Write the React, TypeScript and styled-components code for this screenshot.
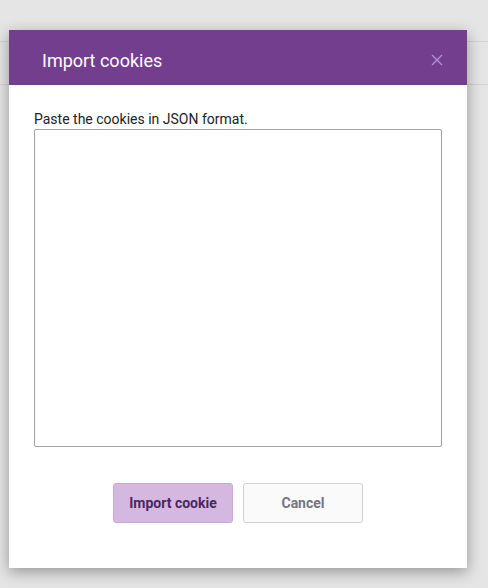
import styled, { createGlobalStyle } from "styled-components";

const GlobalStyle = createGlobalStyle`
  html, body {
    margin: 0;
    padding: 0;
    background: #e5e5e5;
    font-family: Roboto, "Liberation Sans", sans-serif;
  }
`;

const Page = styled.div`
  position: relative;
  width: 488px;
  height: 588px;
  overflow: hidden;
  background: #e5e5e5;
`;

const BackBar = styled.div<{ $height: number }>`
  height: ${(p) => p.$height}px;
  border-bottom: 1px solid #d2d2d2;
  box-sizing: border-box;
`;

const Modal = styled.div`
  position: absolute;
  left: 9px;
  top: 30px;
  width: 458px;
  height: 538px;
  background: #fff;
  box-shadow: 0 4px 14px rgba(0, 0, 0, 0.35);
  display: flex;
  flex-direction: column;
`;

const Header = styled.div`
  height: 55px;
  background: #743e8f;
  display: flex;
  align-items: center;
  justify-content: space-between;
  padding: 5px 24px 0 33px;
  box-sizing: border-box;
`;

const Title = styled.h2`
  margin: 0;
  font-size: 18px;
  font-weight: 400;
  color: #fff;
`;

const CloseButton = styled.button`
  border: none;
  background: none;
  padding: 0;
  width: 12px;
  height: 12px;
  display: flex;
  cursor: pointer;
`;

const Body = styled.div`
  padding: 25px 26px 0 25px;
  display: flex;
  flex-direction: column;
`;

const Label = styled.label`
  font-size: 14px;
  color: #222;
  line-height: 18px;
  margin-bottom: 1px;
`;

const TextArea = styled.textarea`
  width: 408px;
  height: 318px;
  box-sizing: border-box;
  border: 1px solid #a0a0a0;
  border-radius: 2px;
  resize: none;
  outline: none;
  font-family: inherit;
`;

const Actions = styled.div`
  display: flex;
  justify-content: center;
  gap: 10px;
  margin-top: 36px;
  padding-left: 1px;
`;

const Button = styled.button<{ $primary?: boolean }>`
  width: 120px;
  height: 40px;
  border-radius: 3px;
  font-family: Roboto, "Liberation Sans", sans-serif;
  font-size: 14px;
  font-weight: 700;
  cursor: pointer;
  border: 1px solid ${(p) => (p.$primary ? "#c9a9d8" : "#d2d2d6")};
  background: ${(p) => (p.$primary ? "#d5b8e0" : "#fafafa")};
  color: ${(p) => (p.$primary ? "#4b2660" : "#757580")};
`;

export default function App() {
  return (
    <Page>
      <GlobalStyle />
      <BackBar $height={42} />
      <BackBar $height={43} />
      <Modal>
        <Header>
          <Title>Import cookies</Title>
          <CloseButton aria-label="Close">
            <svg width="12" height="12" viewBox="0 0 12 12">
              <path
                d="M1 1 L11 11 M11 1 L1 11"
                stroke="#b68cd0"
                strokeWidth="1.4"
              />
            </svg>
          </CloseButton>
        </Header>
        <Body>
          <Label>Paste the cookies in JSON format.</Label>
          <TextArea />
          <Actions>
            <Button $primary>Import cookie</Button>
            <Button>Cancel</Button>
          </Actions>
        </Body>
      </Modal>
    </Page>
  );
}
